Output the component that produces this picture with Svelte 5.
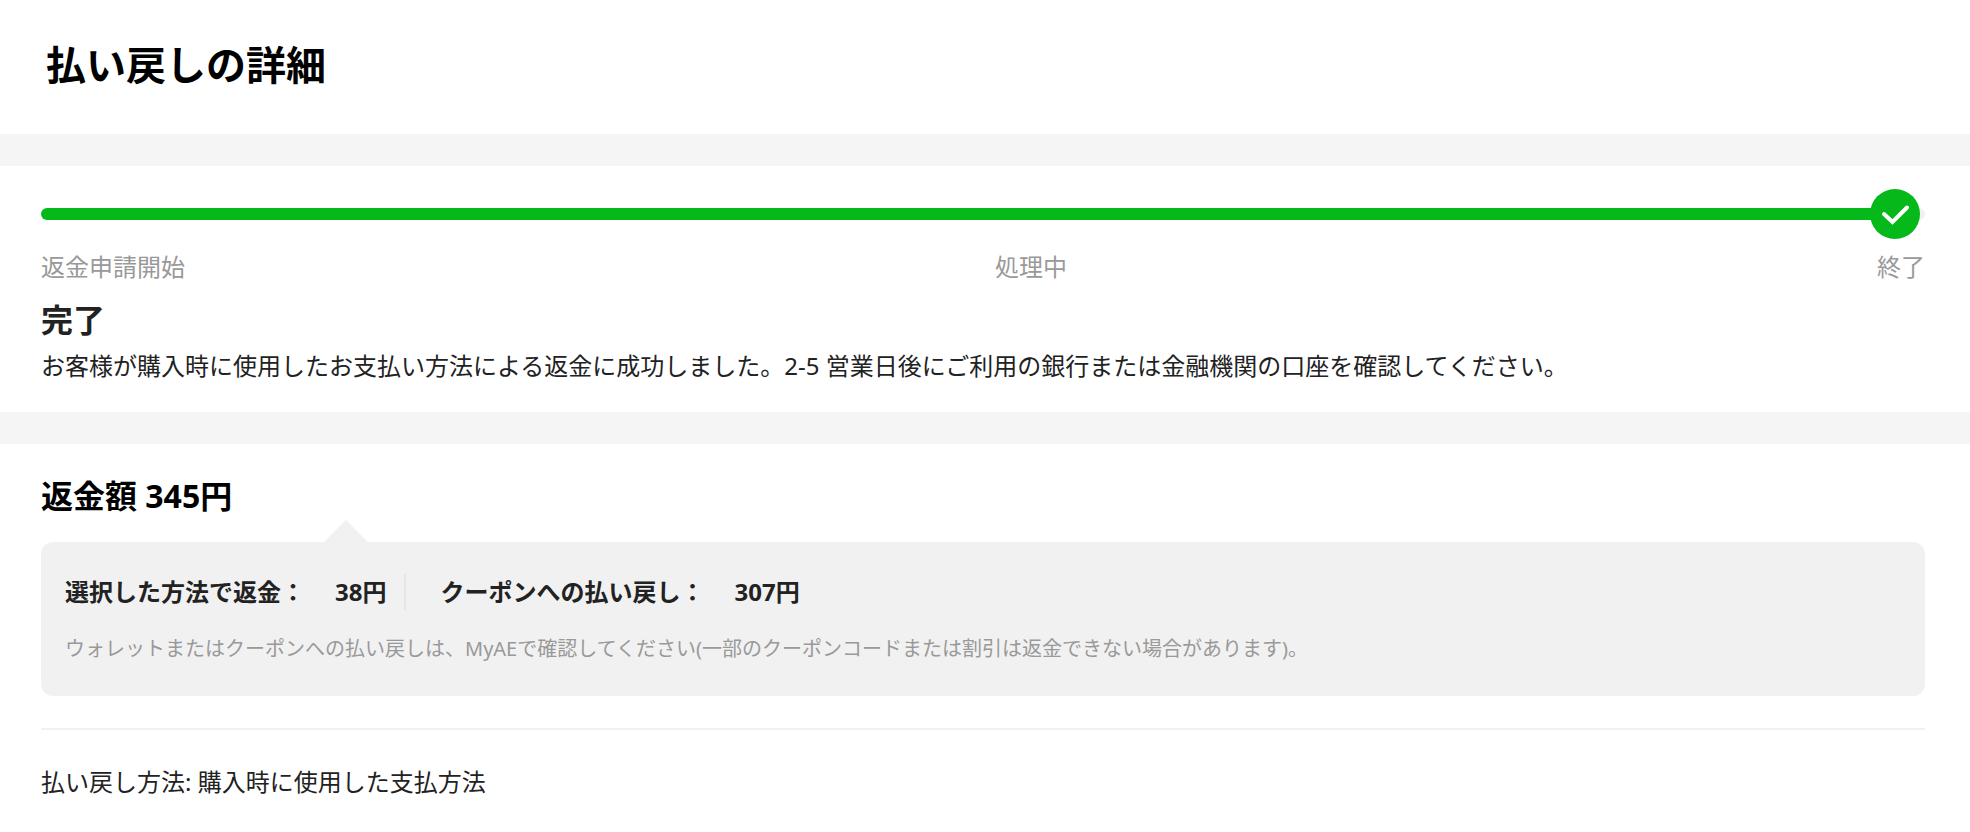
<script>
    const steps = ["返金申請開始", "処理中", "終了"];

    const refunds = [
        { label: "選択した方法で返金：", amount: "38円" },
        { label: "クーポンへの払い戻し：", amount: "307円" },
    ];
</script>

<main>
    <header>
        <h1>払い戻しの詳細</h1>
    </header>

    <section class="status">
        <div class="progress">
            <div class="bar"></div>
            <svg class="check" viewBox="0 0 50 50" aria-hidden="true">
                <circle cx="25" cy="25" r="25" fill="#04b919" />
                <path
                    d="M14 25 L22.500 33 L37 18.500"
                    fill="none"
                    stroke="#fff"
                    stroke-width="4"
                    stroke-linecap="round"
                    stroke-linejoin="miter"
                />
            </svg>
        </div>
        <ol class="steps">
            {#each steps as step}
                <li>{step}</li>
            {/each}
        </ol>
        <h2>完了</h2>
        <p>お客様が購入時に使用したお支払い方法による返金に成功しました。2-5 営業日後にご利用の銀行または金融機関の口座を確認してください。</p>
    </section>

    <section class="amount">
        <h2>返金額 345円</h2>
        <div class="box">
            <dl>
                {#each refunds as refund}
                    <div class="refund">
                        <dt>{refund.label}</dt>
                        <dd>{refund.amount}</dd>
                    </div>
                {/each}
            </dl>
            <p class="note">ウォレットまたはクーポンへの払い戻しは、MyAEで確認してください(一部のクーポンコードまたは割引は返金できない場合があります)。</p>
        </div>
        <p class="method">払い戻し方法: 購入時に使用した支払方法</p>
    </section>
</main>

<style>
    :global(body) {
        margin: 0;
        background: #fff;
    }
    main {
        font-family: "Noto Sans", "Noto Sans CJK JP", sans-serif;
        font-size: 24px;
        line-height: 36px;
        color: #222;
    }
    h1,
    h2,
    p,
    ol,
    dl,
    dd {
        margin: 0;
        padding: 0;
    }
    header {
        padding: 35px 46px 39px;
    }
    h1 {
        font-size: 40px;
        line-height: 60px;
        color: #000;
    }
    h2 {
        font-size: 32px;
        line-height: 48px;
    }
    section {
        border-top: 32px solid #f5f5f5;
        padding: 24px 45px 28px 41px;
    }
    .progress {
        position: relative;
        display: flex;
        align-items: center;
        height: 48px;
    }
    .bar {
        flex: 1;
        height: 12px;
        border-radius: 6px;
        background: linear-gradient(to right, #04b919 98%, #f1f1f1 98%);
    }
    .check {
        position: absolute;
        right: 5px;
        width: 50px;
        height: 50px;
    }
    .steps {
        display: flex;
        justify-content: space-between;
        list-style: none;
        margin: 11px 0;
        color: #999;
    }
    .status p {
        margin-top: 4px;
    }
    .amount {
        padding-top: 28px;
    }
    .amount h2 {
        color: #000;
    }
    .box {
        position: relative;
        margin-top: 22px;
        padding: 32px 24px;
        border-radius: 12px;
        background: #f1f1f1;
    }
    .box::before {
        content: "";
        position: absolute;
        top: -22px;
        left: 283px;
        border: 22px solid transparent;
        border-top: 0;
        border-bottom-color: #f1f1f1;
    }
    dl {
        display: flex;
        font-weight: bold;
    }
    .refund {
        display: flex;
        gap: 30px;
    }
    .refund + .refund {
        margin-left: 18px;
        padding-left: 34px;
        border-left: 2px solid #e6e6e6;
    }
    .note {
        margin-top: 24px;
        font-size: 20px;
        line-height: 30px;
        color: #999;
    }
    .method {
        margin-top: 32px;
        padding-top: 34px;
        border-top: 2px solid #f1f1f1;
    }
</style>
